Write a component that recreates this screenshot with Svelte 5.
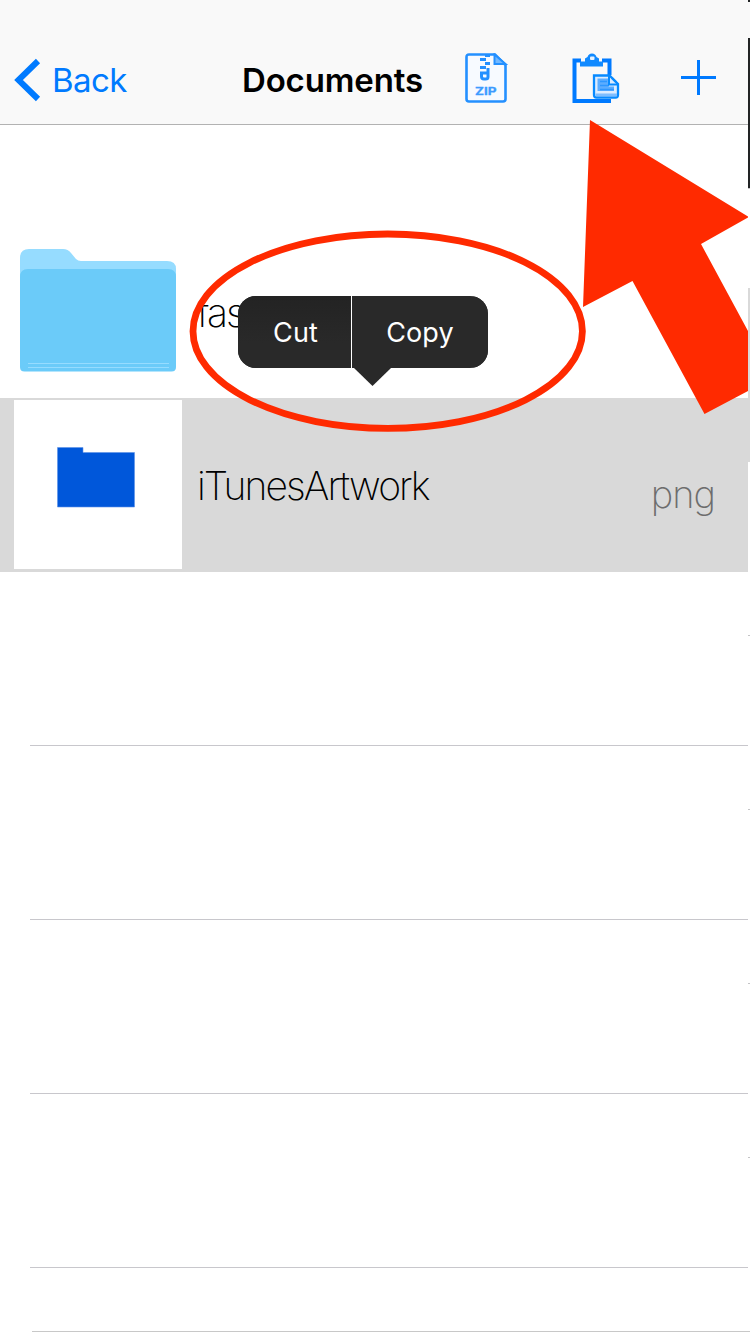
<script>
  const emptyRows = [1, 2, 3, 4];
  const edge = [
    ['dark', 2], ['light', 36], ['dark', 150], ['rule', 1], ['blank', 99], ['shade', 174],
    ['blank', 173], ['rule', 1], ['blank', 173], ['rule', 1], ['blank', 173], ['rule', 1],
    ['blank', 173], ['rule', 1], ['blank', 173]
  ];
</script>

<div class="page">
  <div class="main">
    <div class="screen">
      <header>
        <div class="back">
          <svg width="28" height="44" viewBox="0 0 28 44">
            <path d="M25 3 5.500 22 25 41" fill="none" stroke="#007aff" stroke-width="6" />
          </svg>
          <span>Back</span>
        </div>
        <h1>Documents</h1>
        <div class="actions">
          <svg class="zip" width="44" height="52" viewBox="0 0 44 52" fill="none" stroke="#2490ff">
            <path d="M30 1.500H4Q1.500 1.500 1.500 4V46Q1.500 48.500 4 48.500H38Q40.500 48.500 40.500 46V12Z" fill="#f7faff" stroke-width="2.600" />
            <path d="M29.500 1.500V11H40.500Z" fill="#72b8ff" stroke-width="2" />
            <path d="M20 2.500h5M15 6.500h6M20 10.500h5M15 14.500h6" stroke-width="3" />
            <path d="M23 15V24Q23 26 20.500 26H19Q16.500 26 16.500 23.500V20H22" stroke-width="3" />
            <text x="10" y="41.500" fill="#3c9bff" stroke="#3c9bff" stroke-width=".3" textLength="21.500" lengthAdjust="spacingAndGlyphs">ZIP</text>
          </svg>
          <svg class="paste" width="50" height="52" viewBox="0 0 50 52" fill="none" stroke="#078aff">
            <path d="M9 7.500H2.500V48H39M30 7.500H37.500V22" stroke="#007aff" stroke-width="4" />
            <path d="M8 8.500H13V5.500L15.500 4Q16.500 .5 20 .5Q23.500 .5 24.500 4L27 5.500V8.500H31V13.500H8Z" fill="#118aff" stroke="none" />
            <rect x="18" y="3.500" width="4.500" height="3.500" rx="1" fill="#e8f3ff" stroke="none" />
            <path d="M22 22.500H37.500L46 31V42Q46 44.500 43.500 44.500H24.500Q22 44.500 22 42Z" fill="#dcecff" stroke-width="2.300" />
            <path d="M25.500 25.500H36.500V33.500H42V38H25.500Z" fill="#5cadff" stroke="none" />
            <path d="M28 28.500H35M28 32.500H37M28 36.500H42" stroke="#2e97ff" stroke-width="1.300" />
            <path d="M37 22.500V31.500H46M40 25 44 29" stroke-width="2" />
            <path d="M23.500 42H45" stroke="#7dbdff" stroke-width="3" />
          </svg>
          <svg class="plus" width="36" height="36" viewBox="0 0 36 36">
            <path d="M0 17.500H35M17.500 0V35" stroke="#007aff" stroke-width="3" shape-rendering="crispEdges" />
          </svg>
        </div>
      </header>

      <div class="lead"></div>

      <div class="row folder">
        <svg width="156" height="123" viewBox="0 0 156 123">
          <path d="M0 9Q0 0 9 0H43Q48 0 51 4L56 10Q58 12 61 12H147Q156 12 156 20V40H0Z" fill="#96dcff" />
          <path d="M0 28Q0 20 8 20H148Q156 20 156 28V118Q156 122.600 151.500 122.600H4.500Q0 122.600 0 118Z" fill="#6bcbf9" />
          <path d="M8 114.500H149M8 118.500H149" stroke="#96dcff" stroke-width="1" />
        </svg>
        <span class="name">fas</span>
      </div>

      <div class="row selected">
        <div class="thumb">
          <svg width="78" height="61" viewBox="0 0 78 61">
            <path d="M.5 .5H26V5.500H77.500V60H.5Z" fill="#0057da" stroke="#5e92e8" stroke-width=".6" />
          </svg>
        </div>
        <span class="name">iTunesArtwork</span>
        <span class="ext">png</span>
      </div>

      {#each emptyRows as row (row)}
        <div class="row empty"></div>
      {/each}
    </div>

    <div class="edge">
      {#each edge as [kind, size]}
        <div class={kind} style="height: {size}px"></div>
      {/each}
    </div>
  </div>
  <div class="last-rule"></div>

  <div class="menu">
    <div class="items">
      <button class="cut">Cut</button>
      <button class="copy">Copy</button>
    </div>
    <svg width="37" height="18" viewBox="0 0 37 18"><path d="M0 0H37L18.500 18Z" fill="#292929" /></svg>
  </div>

  <svg class="marks" width="748" height="440" viewBox="0 0 748 440">
    <ellipse cx="387.700" cy="331.200" rx="194.700" ry="97.200" fill="none" stroke="#ff2a00" stroke-width="6.800" />
    <path d="M590 120 749 217 701 244 748 331V391L704.500 414 632.500 281 583 307Z" fill="#ff2a00" />
  </svg>
</div>

<style>
  :global(body) { background: #fff; }
  .page {
    position: relative;
    width: 750px;
    height: 1334px;
    overflow: hidden;
    background: #fff;
    font-family: Inter, "Liberation Sans", sans-serif;
  }
  .main { display: flex; height: 1331px; }
  .screen { width: 748px; display: flex; flex-direction: column; }
  .edge { width: 2px; overflow: hidden; }
  .dark { background: #222425; }
  .light { background: #f9f9f9; }
  .rule { background: #c4c4c6; }
  .shade { background: #d9d9d9; }
  header {
    box-sizing: border-box;
    height: 125px;
    padding-top: 36px;
    border-bottom: 1px solid #b2b2b2;
    background: #f9f9f9;
    display: flex;
    align-items: center;
  }
  .back {
    width: 229px;
    padding-left: 13px;
    display: flex;
    align-items: center;
    gap: 11px;
    color: #007aff;
    font-size: 33px;
  }
  .back span { letter-spacing: -.6px; }
  h1 {
    width: 223px;
    margin: 0;
    font-size: 33px;
    font-weight: 600;
    line-height: 44px;
    letter-spacing: -.15px;
    white-space: nowrap;
  }
  .actions { display: flex; height: 54px; margin-top: -1px; }
  .actions svg { flex: none; }
  .zip text { font: 700 11px Inter, sans-serif; }
  .paste { margin-left: 63px; }
  .plus { margin: 7px 0 0 59px; }
  .lead { height: 99px; }
  .row { box-sizing: border-box; height: 174px; flex: none; display: flex; }
  .name {
    font-size: 39px;
    font-weight: 200;
    line-height: 46px;
    letter-spacing: -1.900px;
    color: #000;
  }
  .folder { padding: 25px 0 0 20px; }
  .folder .name { margin: 41px 0 0 21px; }
  .selected { background: #d9d9d9; padding: 2px 33px 0 14px; }
  .thumb {
    width: 168px;
    height: 169px;
    background: #fff;
    display: flex;
    justify-content: center;
    padding-top: 47px;
    box-sizing: border-box;
    padding-right: 4px;
  }
  .selected .name { margin: 63px 0 0 15px; }
  .ext {
    margin: 71px 0 0 auto;
    font-size: 38px;
    font-weight: 200;
    line-height: 46px;
    letter-spacing: -1px;
    color: #6d6d6d;
  }
  .empty { margin-left: 30px; border-bottom: 1px solid #c8c7cc; }
  .last-rule { height: 1px; margin-left: 32px; background: #c8c8c8; }
  .menu {
    position: absolute;
    left: 238px;
    top: 296px;
    width: 250px;
    display: flex;
    flex-direction: column;
  }
  .items { display: flex; height: 72px; border-radius: 18px; overflow: hidden; background: #292929; }
  .menu > svg { margin-left: 116px; }
  button {
    border: 0;
    padding: 0;
    color: #fff;
    background: #292929;
    font: 400 27px Inter, sans-serif;
    letter-spacing: .1px;
  }
  .cut { width: 113px; padding-left: 2px; background: linear-gradient(#232323, #292929 65%); }
  .copy { flex: 1; margin-left: 1px; box-shadow: -1px 0 #fff; }
  .marks { position: absolute; left: 0; top: 0; pointer-events: none; }
</style>
